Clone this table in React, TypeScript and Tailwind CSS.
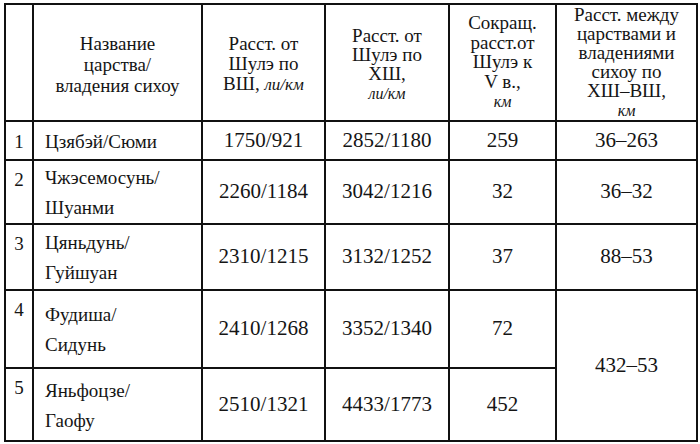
const rows = [
  { n: "1", name: ["Цзябэй/Сюми"], vsh: "1750/921", xsh: "2852/1180", v: "259", dist: "36–263", h: "h-[39px]" },
  { n: "2", name: ["Чжэсемосунь/", "Шуанми"], vsh: "2260/1184", xsh: "3042/1216", v: "32", dist: "36–32", h: "h-[63px]" },
  { n: "3", name: ["Цяньдунь/", "Гуйшуан"], vsh: "2310/1215", xsh: "3132/1252", v: "37", dist: "88–53", h: "h-[66px]" },
  { n: "4", name: ["Фудиша/", "Сидунь"], vsh: "2410/1268", xsh: "3352/1340", v: "72", dist: "432–53", span: 2, h: "h-[78px]" },
  { n: "5", name: ["Яньфоцзе/", "Гаофу"], vsh: "2510/1321", xsh: "4433/1773", v: "452", dist: null, h: "h-[73px]" },
];

const serif = "font-['Liberation_Serif','Times_New_Roman',serif]";
const cell = `border-2 border-[#111] p-0 ${serif}`;
const head = `${cell} font-normal text-center align-middle`;

export default function App() {
  return (
    <div className={`w-[700px] h-[444px] bg-white pl-[4px] pt-[3px] text-[#151515] ${serif}`}>
      <table className={`table-fixed border-collapse w-[692px] ${serif}`}>
        <colgroup>
          <col className="w-[28px]" />
          <col className="w-[169px]" />
          <col className="w-[123px]" />
          <col className="w-[124px]" />
          <col className="w-[107px]" />
          <col className="w-[141px]" />
        </colgroup>
        <thead>
          <tr className="h-[115px] text-[19px] leading-[20px]">
            <th className={head}></th>
            <th className={`${head} leading-[21px] pt-[4px]`}>
              Название
              <br />
              царства/
              <br />
              владения сихоу
            </th>
            <th className={`${head} pt-[4px]`}>
              Расст. от
              <br />
              Шулэ по
              <br />
              ВШ, <i className="text-[17px]">ли/км</i>
            </th>
            <th className={`${head} leading-[19px] pt-[4px]`}>
              Расст. от
              <br />
              Шулэ по
              <br />
              ХШ,
              <br />
              <i className="text-[16px]">ли/км</i>
            </th>
            <th className={`${head} leading-[19.5px]`}>
              Сокращ.
              <br />
              расст.от
              <br />
              Шулэ к
              <br />V в.,
              <br />
              <i className="text-[16px]">км</i>
            </th>
            <th className={`${head} leading-[19px]`}>
              Расст. между
              <br />
              царствами и
              <br />
              владениями
              <br />
              сихоу по
              <br />
              ХШ–ВШ,
              <br />
              <i className="text-[16px]">км</i>
            </th>
          </tr>
        </thead>
        <tbody>
          {rows.map((r) => (
            <tr key={r.n} className={r.h}>
              <td className={`${cell} align-top text-center text-[19px] leading-[22px] ${r.n === "1" ? "pt-[9px]" : "pt-[8px]"}`}>
                {r.n}
              </td>
              <td className={`${cell} pl-[11px] text-[19px] leading-[30px] pt-[2px]`}>
                {r.name.map((l) => (
                  <div key={l}>{l}</div>
                ))}
              </td>
              <td className={`${cell} text-center text-[21px]`}>{r.vsh}</td>
              <td className={`${cell} text-center text-[21px]`}>{r.xsh}</td>
              <td className={`${cell} text-center text-[21px]`}>{r.v}</td>
              {r.dist !== null && (
                <td rowSpan={r.span ?? 1} className={`${cell} text-center text-[21px]`}>
                  {r.dist}
                </td>
              )}
            </tr>
          ))}
        </tbody>
      </table>
    </div>
  );
}
